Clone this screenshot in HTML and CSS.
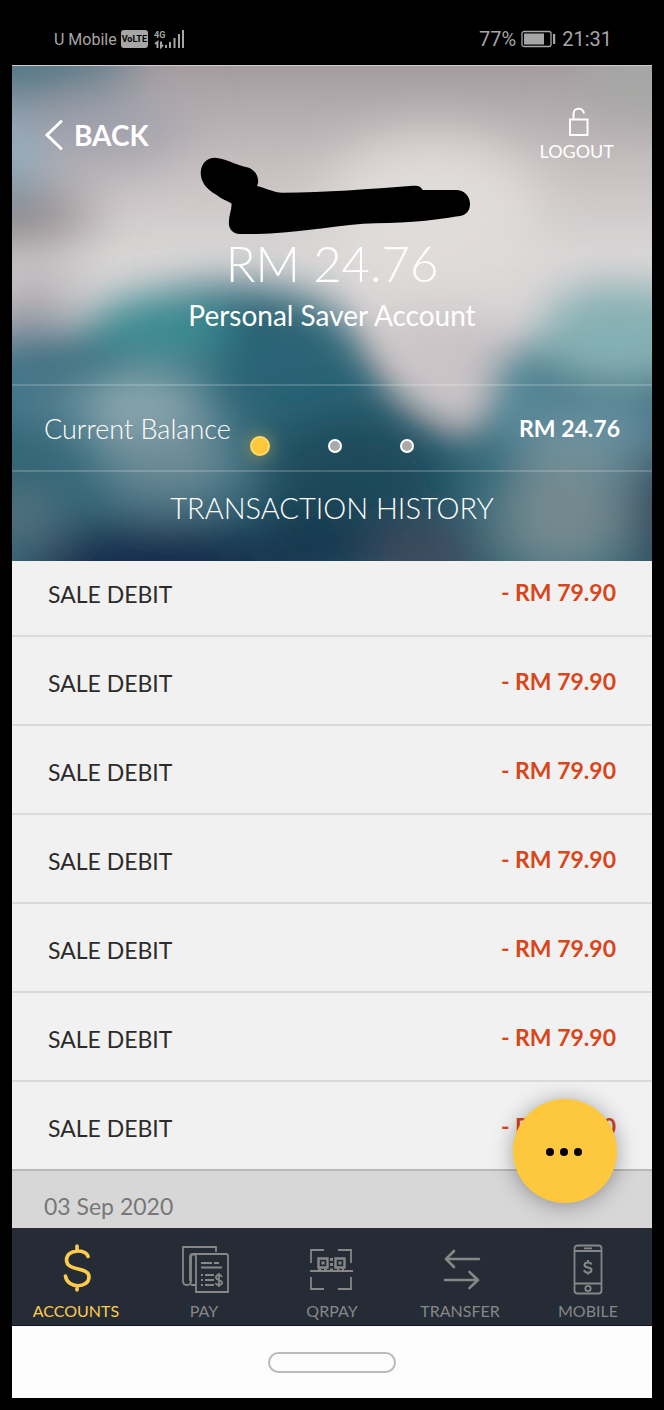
FILE: index.html
```html
<!DOCTYPE html>
<html lang="en">
<head>
<meta charset="utf-8">
<meta name="viewport" content="width=device-width, initial-scale=1">
<title>Personal Saver Account</title>
<link rel="stylesheet" href="styles.css">
</head>
<body>
<div class="phone">
  <div class="status">
    <div class="status-side">
      <span class="carrier">U Mobile</span>
      <span class="volte">VoLTE</span>
      <svg class="signal" width="32" height="20" viewBox="0 0 32 20" aria-hidden="true">
        <text class="signal-text" x="0" y="9">4G</text>
        <path class="signal-line" d="M3.500 19v-6L1 15M7 12.500V18l2-2"/>
        <path class="signal-bars" d="M11 16h2v3h-2zM15 13h2v6h-2zM19.500 9h2v10h-2zM24 5h2v14h-2zM28 1h2v18h-2z"/>
      </svg>
    </div>
    <div class="status-side status-right">
      <span>77%</span>
      <svg width="36" height="18" viewBox="0 0 36 18" aria-hidden="true">
        <rect x="1" y="1.500" width="29" height="15" rx="2" fill="none" stroke="#a6a6a6" stroke-width="1.300"/>
        <rect x="3" y="3.500" width="20" height="11" fill="#a6a6a6"/>
        <rect x="32" y="4" width="2.200" height="10" fill="#a6a6a6"/>
      </svg>
      <span>21:31</span>
    </div>
  </div>

  <header class="hero">
    <svg class="backdrop" viewBox="0 0 640 495" preserveAspectRatio="none" aria-hidden="true">
      <defs>
        <linearGradient id="sky" x1="0" y1="0" x2="0" y2="1">
          <stop offset="0" stop-color="#a59c9f"/>
          <stop offset=".2" stop-color="#c6bfc0"/>
          <stop offset=".38" stop-color="#dad6d6"/>
          <stop offset=".6" stop-color="#d8d3d3"/>
          <stop offset="1" stop-color="#b0a9b0"/>
        </linearGradient>
        <filter id="b20" x="-50%" y="-50%" width="200%" height="200%"><feGaussianBlur stdDeviation="20"/></filter>
        <filter id="b26" x="-80%" y="-80%" width="260%" height="260%"><feGaussianBlur stdDeviation="26"/></filter>
      </defs>
      <rect width="640" height="495" fill="url(#sky)"/>
      <g filter="url(#b26)">
        <ellipse cx="30" cy="-5" rx="90" ry="45" fill="#4b7482"/>
        <ellipse cx="-12" cy="90" rx="48" ry="48" fill="#8fadbf"/>
        <ellipse cx="90" cy="60" rx="85" ry="40" fill="#a3a3ad"/>
        <ellipse cx="-5" cy="150" rx="90" ry="24" fill="#80787a"/>
        <ellipse cx="630" cy="10" rx="60" ry="40" fill="#a5a8a6"/>
        <ellipse cx="420" cy="150" rx="110" ry="80" fill="#e0dcda"/>
        <ellipse cx="10" cy="330" rx="70" ry="70" fill="#457388"/>
        <ellipse cx="20" cy="240" rx="50" ry="30" fill="#aba7ae"/>
      </g>
      <g filter="url(#b20)">
        <path d="M-40 320 C20 310 60 275 110 236 C170 215 260 212 315 240 C355 270 375 320 400 355 C450 395 480 355 500 310 C530 262 580 225 680 228 V560 H-40Z" fill="#2c6475"/>
        <ellipse cx="150" cy="262" rx="70" ry="34" fill="#3a8a92"/>
        <ellipse cx="605" cy="270" rx="78" ry="52" fill="#85b0b4"/>
        <ellipse cx="505" cy="325" rx="28" ry="45" fill="#4f8796"/>
        <path d="M370 250 H488 C484 305 464 340 440 340 C412 340 392 305 370 250Z" fill="#cbc3c6"/>
      </g>
      <g filter="url(#b26)">
        <ellipse cx="130" cy="340" rx="70" ry="38" fill="#95b1b7"/>
        <ellipse cx="15" cy="330" rx="40" ry="40" fill="#4f7d90"/>
        <ellipse cx="155" cy="395" rx="75" ry="45" fill="#6d8b97"/>
        <ellipse cx="-15" cy="405" rx="50" ry="35" fill="#235d6c"/>
        <ellipse cx="580" cy="365" rx="90" ry="40" fill="#6b93a1"/>
        <ellipse cx="550" cy="450" rx="70" ry="65" fill="#74898f"/>
        <ellipse cx="660" cy="450" rx="40" ry="80" fill="#2f455c"/>
        <ellipse cx="345" cy="410" rx="95" ry="60" fill="#1b4a5a"/>
        <ellipse cx="150" cy="505" rx="140" ry="48" fill="#122a4b"/>
        <ellipse cx="290" cy="485" rx="85" ry="35" fill="#16354d"/>
        <ellipse cx="10" cy="450" rx="45" ry="38" fill="#557380"/>
        <ellipse cx="420" cy="490" rx="60" ry="24" fill="#493f53"/>
      </g>
    </svg>

    <div class="topbar">
      <button class="back" type="button">
        <svg width="20" height="32" viewBox="0 0 20 32" aria-hidden="true"><path d="M17 2.500 3 16l14 13.500" fill="none" stroke="currentColor" stroke-width="3" stroke-linecap="round"/></svg>
        <span>BACK</span>
      </button>
      <button class="logout" type="button">
        <svg width="24" height="32" viewBox="0 0 24 32" aria-hidden="true"><path d="M5 12.500h17.500V28H5zM8.500 12V7c0-7 9.500-7 10.500-.5" fill="none" stroke="currentColor" stroke-width="2"/></svg>
        <span>LOGOUT</span>
      </button>
    </div>

    <div class="summary">
      <svg class="redaction" width="270" height="78" viewBox="0 0 270 78" aria-hidden="true">
        <path d="M.7 16C1 6 7 .7 15 .7 24 1 36 8 48 10.500 55 13 59 19 58 26L57 29C65 31 75 36 83 35.700 125 35.500 170 32 213 28.700 219 28.500 221 30 222.700 33H256C264 33 270 39 270 47 270 54 266 58 260 59 245 61 230 64 213 64.700 196 66 180 66 163 66.700 128 70 92 76 57 77H40C33 77 28 72 29 64 29 58 32 52 31.500 46.500 26 43 21 42 16.700 38 6 32 1 25 .7 16Z"/>
      </svg>
      <p class="amount">RM 24.76</p>
      <h1 class="account">Personal Saver Account</h1>
    </div>

    <div class="balance">
      <span class="balance-label">Current Balance</span>
      <strong class="balance-value">RM 24.76</strong>
      <div class="dots">
        <span class="dot dot-active"></span>
        <span class="dot"></span>
        <span class="dot"></span>
      </div>
    </div>
    <h2 class="history">TRANSACTION HISTORY</h2>
  </header>

  <main class="transactions">
    <ul class="list">
      <li class="row"><span class="row-name">SALE DEBIT</span><span class="row-sum">- RM 79.90</span></li>
      <li class="row"><span class="row-name">SALE DEBIT</span><span class="row-sum">- RM 79.90</span></li>
      <li class="row"><span class="row-name">SALE DEBIT</span><span class="row-sum">- RM 79.90</span></li>
      <li class="row"><span class="row-name">SALE DEBIT</span><span class="row-sum">- RM 79.90</span></li>
      <li class="row"><span class="row-name">SALE DEBIT</span><span class="row-sum">- RM 79.90</span></li>
      <li class="row"><span class="row-name">SALE DEBIT</span><span class="row-sum">- RM 79.90</span></li>
      <li class="row"><span class="row-name">SALE DEBIT</span><span class="row-sum">- RM 79.90</span></li>
    </ul>
    <h3 class="date">03 Sep 2020</h3>
    <button class="fab" type="button" aria-label="More actions">
      <svg width="36" height="10" viewBox="0 0 36 10" aria-hidden="true"><circle cx="3" cy="6" r="4"/><circle cx="17" cy="6" r="4"/><circle cx="31" cy="6" r="4"/></svg>
    </button>
  </main>

  <nav class="tabs">
    <a class="tab tab-active" href="#accounts">
      <svg width="52" height="52" viewBox="0 0 52 52" aria-hidden="true"><path d="M27 3v5M27 43v4M38 13.500C36 5.500 16.500 6 16.500 17c0 12 22.500 6 22.500 17 0 11.500-22 12-23.500-1" fill="none" stroke="currentColor" stroke-width="3.600" stroke-linecap="round"/></svg>
      <span>ACCOUNTS</span>
    </a>
    <a class="tab" href="#pay">
      <svg width="52" height="52" viewBox="0 0 52 52" fill="none" stroke="currentColor" stroke-width="1.800" aria-hidden="true">
        <path d="M38 9V4H5v34q0 4 4 4 4 0 4-4V15q0-4 3.500-4H48q2 0 2 2v36H18V15q0-4-3-4"/>
        <path d="M13 42h5M12 38V14q0-4 4-3"/>
        <path d="M23 20h11M36 20h5M23 24.500h21M23 32h2M27 32h9M23 37h2M27 37h9M23 42h2M27 42h9"/>
        <path d="M41 30v14M44 34c-1-3-6-2.500-6 .5s6 2 6 5-5.500 3.500-6.500.5"/>
      </svg>
      <span>PAY</span>
    </a>
    <a class="tab" href="#qrpay">
      <svg width="52" height="52" viewBox="0 0 52 52" fill="none" stroke="currentColor" stroke-width="1.800" aria-hidden="true">
        <path d="M5 20V7h13M32 7h13v13M5 34v12h13M32 46h13V34M4 28h43"/>
        <path stroke-width="2.400" d="M12.500 15.500h9v9h-9zM29.500 15.500h9v9h-9z"/>
        <path fill="currentColor" stroke="none" d="M15.500 18.500h3v3h-3zM32.500 18.500h3v3h-3zM24 15h3v3h-3zM24 20h3v3h-3zM12 25.500h3v2h-3zM18 25.500h3v2h-3zM24 25.500h3v2h-3zM31 25.500h2v2h-2zM36 25.500h2v2h-2z"/>
      </svg>
      <span>QRPAY</span>
    </a>
    <a class="tab" href="#transfer">
      <svg width="52" height="52" viewBox="0 0 52 52" fill="none" stroke="currentColor" stroke-width="2.600" stroke-linecap="round" aria-hidden="true">
        <path d="M45 16H12M20 8l-8 8 8 8M11 37h33M35.500 29l8.500 8-8.500 8"/>
      </svg>
      <span>TRANSFER</span>
    </a>
    <a class="tab" href="#mobile">
      <svg width="52" height="52" viewBox="0 0 52 52" fill="none" stroke="currentColor" stroke-width="1.800" aria-hidden="true">
        <rect x="12.500" y="2.500" width="27" height="48" rx="3"/>
        <path d="M12.500 8h27M12.500 40.500h27M22 5.300h8"/>
        <circle cx="26" cy="45.500" r="2.700"/>
        <path stroke-width="2" d="M26 17v2.500M26 29v2.500M29.500 21.500c-1-3-7-2.500-7 .5 0 3.500 7 1.500 7 5s-6.500 3.500-7.500 0"/>
      </svg>
      <span>MOBILE</span>
    </a>
  </nav>

  <div class="homebar"><button class="home" type="button" aria-label="Home"></button></div>
</div>
</body>
</html>
```
FILE: styles.css
```css
* {
  box-sizing: border-box;
  margin: 0;
  padding: 0;
}

body {
  background: #000;
  font-family: Lato, "Liberation Sans", sans-serif;
}

button {
  border: 0;
  background: none;
  color: inherit;
  font-family: inherit;
}

.phone {
  padding: 0 12px 12px;
}

.status {
  display: flex;
  justify-content: space-between;
  align-items: center;
  height: 65px;
  padding: 13px 40px 0 42px;
  color: #a6a6a6;
  font-family: Roboto, sans-serif;
}

.status-side {
  display: flex;
  align-items: center;
  gap: 4px;
}

.status-right {
  gap: 5px;
  font-size: 20px;
}

.carrier {
  font-size: 16px;
}

.volte {
  padding: 0 1px;
  border-radius: 3px;
  background: #a6a6a6;
  color: #000;
  font-size: 9px;
  font-weight: 700;
  line-height: 18px;
}

.signal {
  margin-left: 2px;
}

.signal-text {
  fill: #a6a6a6;
  font-size: 9px;
  font-weight: 700;
}

.signal-line {
  fill: none;
  stroke: #a6a6a6;
  stroke-width: 2;
}

.signal-bars {
  fill: #a6a6a6;
}

.hero {
  position: relative;
  isolation: isolate;
  overflow: hidden;
  border-top: 1px solid #d0cccd;
  color: #fff;
}

.backdrop {
  position: absolute;
  inset: 0;
  z-index: -1;
  width: 100%;
  height: 100%;
}

.topbar {
  display: flex;
  justify-content: space-between;
  align-items: center;
  padding: 41px 38px 0 32px;
}

.back {
  display: flex;
  align-items: center;
  gap: 10px;
  font-size: 28px;
  font-weight: 700;
}

.logout {
  display: flex;
  flex-direction: column;
  align-items: center;
  font-size: 18px;
  line-height: 24px;
}

.summary {
  display: flex;
  flex-direction: column;
  align-items: center;
  height: 221px;
}

.redaction {
  flex: none;
  margin: -6px 0 0 6px;
}

.amount {
  font-size: 49px;
  font-weight: 300;
  line-height: 56px;
}

.account {
  font-size: 28px;
  font-weight: 400;
  line-height: 48px;
}

.balance {
  position: relative;
  display: flex;
  justify-content: space-between;
  align-items: center;
  height: 88px;
  padding: 0 32px;
  border-top: 2px solid rgba(255, 255, 255, 0.18);
  border-bottom: 2px solid rgba(255, 255, 255, 0.18);
}

.balance-label {
  font-size: 27px;
  font-weight: 300;
}

.balance-value {
  font-size: 23px;
  font-weight: 700;
}

.dots {
  position: absolute;
  top: 50px;
  left: 50%;
  display: flex;
  align-items: center;
  gap: 58px;
  margin-left: -82px;
}

.dot {
  width: 14px;
  height: 14px;
  border: 2px solid #fff;
  border-radius: 50%;
  background: #aaa;
}

.dot-active {
  width: 20px;
  height: 20px;
  border-color: #ffd966;
  background: #ffc83c;
  box-shadow: 0 0 18px rgba(255, 200, 60, 0.5);
}

.history {
  height: 89px;
  font-size: 29px;
  font-weight: 300;
  line-height: 72px;
  text-align: center;
}

.transactions {
  position: relative;
  background: #f1f1f1;
}

.list {
  overflow: hidden;
  list-style: none;
}

.row {
  display: flex;
  justify-content: space-between;
  align-items: center;
  height: 89px;
  padding: 0 36px;
  border-bottom: 2px solid #dadada;
  font-size: 23px;
}

.row:first-child {
  margin-top: -13px;
}

.row:last-child {
  border-bottom-color: #b8b8b8;
}

.row-name {
  padding-top: 4px;
  color: #2b2b2b;
}

.row-sum {
  color: #d8461b;
  font-weight: 700;
}

.date {
  height: 57px;
  padding-left: 32px;
  background: #d7d7d7;
  color: #777;
  font-size: 23px;
  font-weight: 400;
  line-height: 70px;
}

.fab {
  position: absolute;
  right: 35px;
  bottom: 25px;
  display: flex;
  justify-content: center;
  align-items: center;
  width: 104px;
  height: 104px;
  border-radius: 50%;
  background: #fec83e;
  box-shadow: 0 2px 22px rgba(0, 0, 0, 0.35);
}

.fab svg {
  overflow: visible;
}

.tabs {
  position: relative;
  display: grid;
  grid-template-columns: repeat(5, 1fr);
  height: 98px;
  padding-top: 15px;
  border-bottom: 1px solid #12161c;
  background: #252c36;
}

.tab {
  display: flex;
  flex-direction: column;
  align-items: center;
  gap: 4px;
  color: #868786;
  font-size: 16px;
  line-height: 24px;
  text-decoration: none;
}

.tab-active {
  color: #fecb4d;
}

.homebar {
  display: flex;
  justify-content: center;
  align-items: center;
  height: 72px;
  background: #fcfcfc;
}

.home {
  width: 128px;
  height: 21px;
  border: 2px solid #bababa;
  border-radius: 11px;
}
```
